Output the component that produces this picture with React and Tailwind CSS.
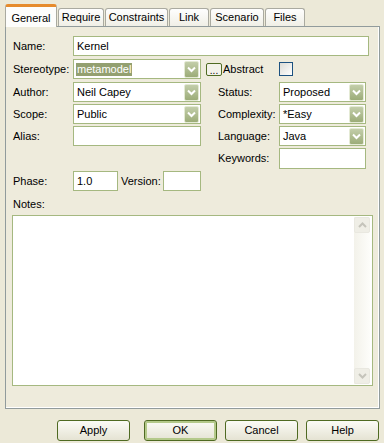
import React from "react";

const font = { fontFamily: '"Liberation Sans", Arial, sans-serif' };

function DropArrow() {
  return (
    <div className="w-[15px] h-[17px] mt-[1px] mr-[1px] rounded-[2px] border border-[#e4ead4] bg-gradient-to-b from-[#c3ceaa] to-[#9cac78] flex items-center justify-center">
      <svg width="9" height="7" viewBox="0 0 9 7">
        <path d="M1 1.5 L4.5 5 L8 1.5" fill="none" stroke="#ffffff" strokeWidth="2" />
      </svg>
    </div>
  );
}

function Combo({ value, width, selected }) {
  return (
    <div className={`h-[20px] ${width} border border-[#a5b880] bg-white flex items-start justify-between`}>
      {selected ? (
        <span className="mt-[3px] ml-[2px] px-[1px] leading-[13px] bg-[#93a070] text-white">{value}</span>
      ) : (
        <span className="mt-[2px] ml-[3px] leading-[15px]">{value}</span>
      )}
      <DropArrow />
    </div>
  );
}

function Input({ value, width }) {
  return (
    <div className={`h-[20px] ${width} border border-[#a5b880] bg-white px-[3px] leading-[18px]`}>{value}</div>
  );
}

function Label({ children }) {
  return <div className="w-[60px] leading-[20px]">{children}</div>;
}

function Tab({ children, width }) {
  return (
    <div className={`${width} ml-[1px] h-[18px] border border-b-0 border-[#aaaaa0] rounded-t-[3px] bg-gradient-to-b from-[#fefefe] to-[#f0efe6] flex items-center justify-center`}>
      {children}
    </div>
  );
}

function Button({ children, main }) {
  return (
    <div className={`w-[73px] h-[21px] rounded-[3px] border border-[#4f6a22] bg-gradient-to-b from-[#fbfbf6] to-[#e5e3d3] flex items-center justify-center ${main ? "shadow-[inset_0_0_0_2px_#b4c98a]" : ""}`}>
      {children}
    </div>
  );
}

export default function App() {
  return (
    <div className="w-[384px] h-[443px] bg-[#ece9d8] text-[11px] text-black overflow-hidden" style={font}>
      {/* tabs */}
      <div className="flex items-end h-[23px] mt-[3px] pl-[5px]">
        <div className="relative z-10 w-[52px] h-[23px] -mb-[1px] border-x border-[#aaaaa0] rounded-t-[3px] bg-[#fdfdfb] border-t-[3px] border-t-[#e68b2c] flex items-start justify-center pt-[3px]">
          General
        </div>
        <Tab width="w-[46px]">Require</Tab>
        <Tab width="w-[63px]">Constraints</Tab>
        <Tab width="w-[40px]">Link</Tab>
        <Tab width="w-[54px]">Scenario</Tab>
        <Tab width="w-[40px]">Files</Tab>
      </div>

      {/* panel */}
      <div className="ml-[5px] w-[375px] h-[383px] border border-[#919b9c] bg-[#eeebdc] shadow-[inset_-1px_-1px_0_#ffffff]">
        <div className="flex mt-[9px] pl-[7px]">
          <Label>Name:</Label>
          <Input value="Kernel" width="w-[296px]" />
        </div>

        <div className="flex items-center mt-[3px] pl-[7px]">
          <Label>Stereotype:</Label>
          <Combo value="metamodel" width="w-[128px]" selected />
          <div className="ml-[5px] w-[16px] h-[13px] rounded-[2px] border border-[#4f6a22] bg-[#f3f2ea] flex items-end justify-center leading-[9px] text-[10px]">...</div>
          <span className="ml-[1px] w-[56px]">Abstract</span>
          <div className="w-[14px] h-[14px] border border-[#1c5180] bg-gradient-to-br from-[#dcdbd5] to-[#ffffff]" />
        </div>

        <div className="flex mt-[3px] pl-[7px]">
          <Label>Author:</Label>
          <Combo value="Neil Capey" width="w-[128px]" />
          <div className="ml-[17px] w-[61px] leading-[20px]">Status:</div>
          <Combo value="Proposed" width="w-[87px]" />
        </div>

        <div className="flex mt-[2px] pl-[7px]">
          <Label>Scope:</Label>
          <Combo value="Public" width="w-[128px]" />
          <div className="ml-[17px] w-[61px] leading-[20px]">Complexity:</div>
          <Combo value="*Easy" width="w-[87px]" />
        </div>

        <div className="flex mt-[2px] pl-[7px]">
          <Label>Alias:</Label>
          <Input value="" width="w-[128px]" />
          <div className="ml-[17px] w-[61px] leading-[20px]">Language:</div>
          <Combo value="Java" width="w-[87px]" />
        </div>

        <div className="flex mt-[2px] pl-[212px]">
          <div className="w-[61px] leading-[20px]">Keywords:</div>
          <div className="h-[21px] w-[87px] border border-[#a5b880] bg-white" />
        </div>

        <div className="flex mt-[2px] pl-[7px]">
          <Label>Phase:</Label>
          <Input value="1.0" width="w-[45px]" />
          <div className="ml-[3px] w-[42px] leading-[20px]">Version:</div>
          <Input value="" width="w-[38px]" />
        </div>

        <div className="mt-[6px] pl-[7px] h-[14px] leading-[14px]">Notes:</div>

        <div className="mt-[4px] ml-[6px] w-[361px] h-[171px] border border-[#a5b880] bg-white flex justify-end">
          <div className="w-[16px] mr-[2px] my-[1px] bg-gradient-to-r from-[#f3f2ea] to-[#fdfdfa] flex flex-col justify-between">
            <div className="h-[16px] rounded-[2px] border border-[#e9e8e0] bg-[#efeee6] flex items-center justify-center">
              <svg width="9" height="6" viewBox="0 0 9 6">
                <path d="M1 5 L4.5 1.5 L8 5" fill="none" stroke="#c5c4bb" strokeWidth="2" />
              </svg>
            </div>
            <div className="h-[16px] rounded-[2px] border border-[#e9e8e0] bg-[#efeee6] flex items-center justify-center">
              <svg width="9" height="6" viewBox="0 0 9 6">
                <path d="M1 1 L4.5 4.5 L8 1" fill="none" stroke="#c5c4bb" strokeWidth="2" />
              </svg>
            </div>
          </div>
        </div>
      </div>

      {/* buttons */}
      <div className="flex mt-[11px] pl-[57px]">
        <Button>Apply</Button>
        <div className="ml-[14px]"><Button main>OK</Button></div>
        <div className="ml-[8px]"><Button>Cancel</Button></div>
        <div className="ml-[8px]"><Button>Help</Button></div>
      </div>
    </div>
  );
}
